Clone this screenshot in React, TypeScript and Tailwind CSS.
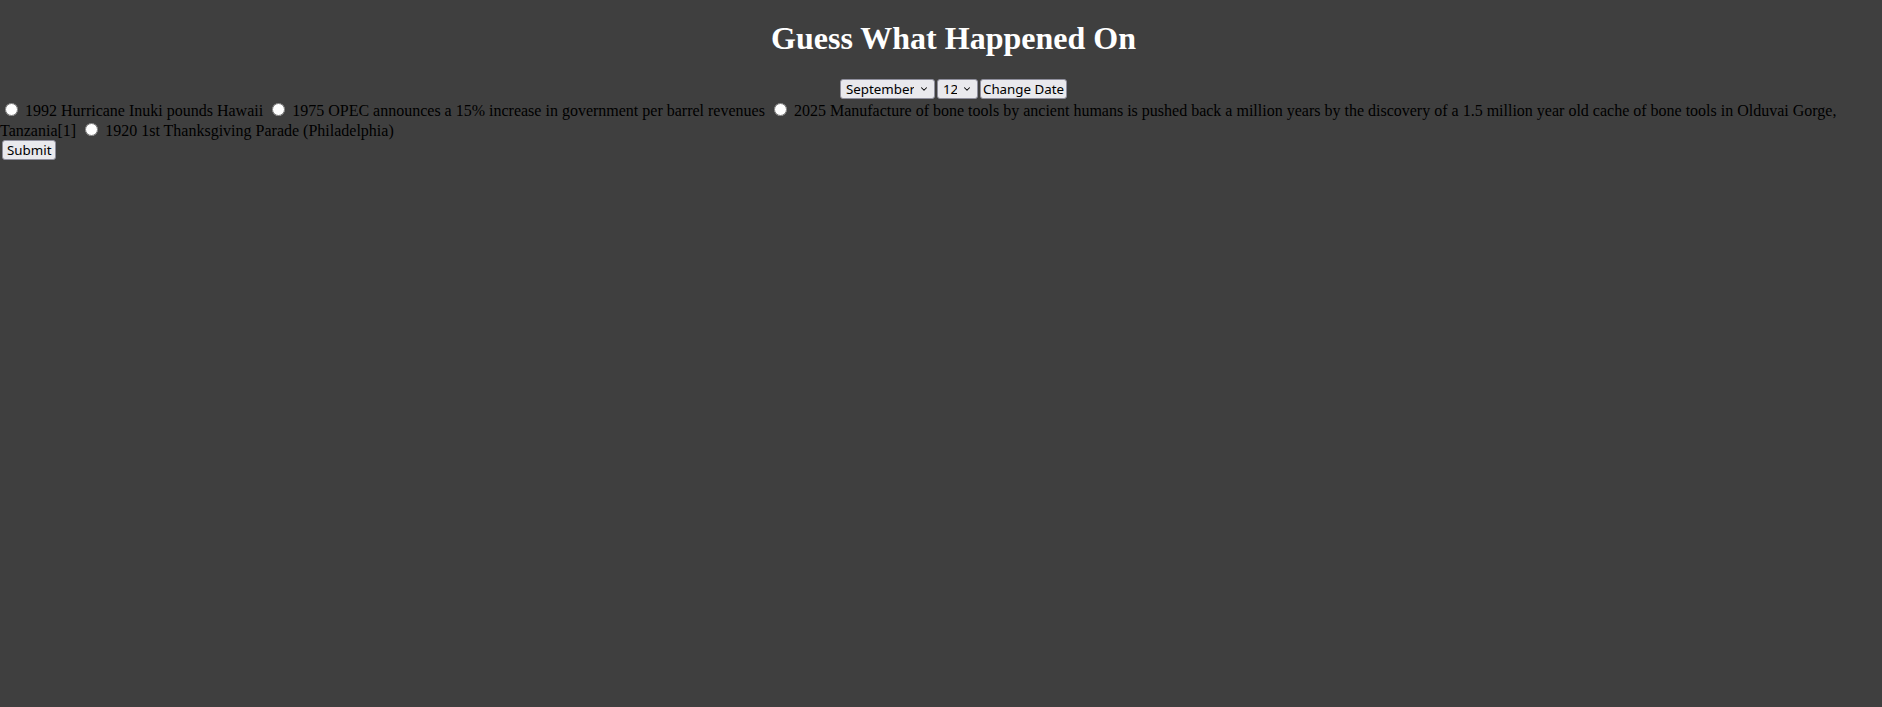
import { ChevronDown } from "lucide-react";

const months = [
  "January", "February", "March", "April", "May", "June",
  "July", "August", "September", "October", "November", "December",
];

const choices = [
  "1992 Hurricane Inuki pounds Hawaii",
  "1975 OPEC announces a 15% increase in government per barrel revenues",
  "2025 Manufacture of bone tools by ancient humans is pushed back a million years by the discovery of a 1.5 million year old cache of bone tools in Olduvai Gorge, Tanzania[1]",
  "1920 1st Thanksgiving Parade (Philadelphia)",
];

const controlFont = "font-['Noto_Sans','DejaVu_Sans',sans-serif] text-[13.33px] leading-[normal] text-black";

function Dropdown({ value, options, width }: { value: string; options: string[]; width: string }) {
  return (
    <span className={`relative inline-block align-middle ${width}`}>
      <select
        defaultValue={value}
        className={`${controlFont} appearance-none w-full h-[20px] pl-[5px] pr-[20px] bg-[#e9e9ed] border border-[#8f8f9d] rounded-[3px]`}
      >
        {options.map((o) => (
          <option key={o}>{o}</option>
        ))}
      </select>
      <ChevronDown size={10} strokeWidth={2.5} className="absolute right-[6px] top-[5px] text-black pointer-events-none" />
    </span>
  );
}

export default function App() {
  const days = Array.from({ length: 31 }, (_, i) => String(i + 1));

  return (
    <div className="min-h-screen bg-[#3f3f3f] font-['Liberation_Serif','Times_New_Roman',serif] text-black leading-[normal]">
      <h1 className="text-[32px] font-bold text-white text-center pl-[25px] pt-[20px] pb-[22px] leading-[37px]">
        Guess What Happened On
      </h1>

      {/* date picker */}
      <div className="flex justify-center items-center gap-[2px] pl-[25px] h-[20px]">
        <Dropdown value="September" options={months} width="w-[95px]" />
        <Dropdown value="12" options={days} width="w-[41px]" />
        <button className={`${controlFont} h-[20px] w-[87px] bg-[#e9e9ed] border border-[#8f8f9d] rounded-[3px]`}>
          Change Date
        </button>
      </div>

      {/* choices */}
      <div className="text-[16px] mt-[1px]">
        {choices.map((c) => (
          <span key={c}>
            <input type="radio" name="guess" className="m-[3px_3px_0_5px] w-[13px] h-[13px]" />
            {" "}{c}{" "}
          </span>
        ))}
      </div>

      <button className={`${controlFont} h-[20px] px-[4px] ml-[2px] bg-[#e9e9ed] border border-[#8f8f9d] rounded-[3px]`}>
        Submit
      </button>
    </div>
  );
}
